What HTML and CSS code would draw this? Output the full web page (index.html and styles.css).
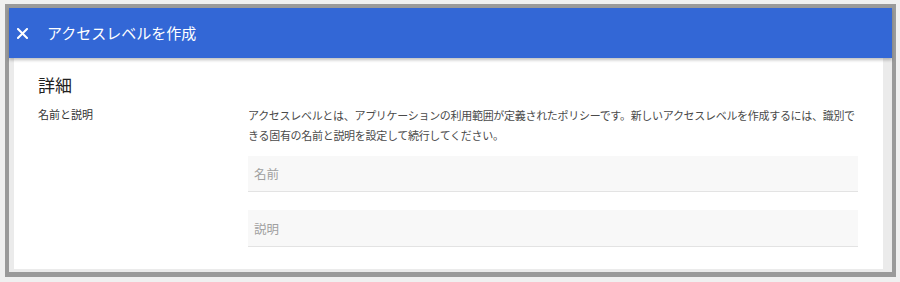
FILE: index.html
```html
<!DOCTYPE html>
<html lang="ja">
<head>
<meta charset="utf-8">
<link rel="stylesheet" href="styles.css">
</head>
<body>
<div class="frame">
  <header class="topbar">
    <svg class="close" width="11" height="11" viewBox="0 0 11 11" aria-hidden="true">
      <path d="M1 1 L10 10 M10 1 L1 10" stroke="#fff" stroke-width="2" stroke-linecap="square"/>
    </svg>
    <h1 class="title">アクセスレベルを作成</h1>
  </header>
  <div class="body">
    <main class="panel">
      <h2 class="heading">詳細</h2>
      <div class="row">
        <div class="label">名前と説明</div>
        <div class="fields">
          <p class="desc">アクセスレベルとは、アプリケーションの利用範囲が定義されたポリシーです。新しいアクセスレベルを作成するには、識別できる固有の名前と説明を設定して続行してください。</p>
          <div class="field">名前</div>
          <div class="field second">説明</div>
        </div>
      </div>
    </main>
  </div>
</div>
</body>
</html>
```
FILE: styles.css
```css
* { box-sizing: border-box; }
html, body { margin: 0; padding: 0; }
body {
  background: #f0f0f0;
  font-family: "Noto Sans CJK JP", "Noto Sans", sans-serif;
  width: 900px;
  height: 282px;
  overflow: hidden;
  padding: 4px 0 0 5px;
}
.frame {
  width: 891px;
  height: 273px;
  border: 4px solid #9a9a9a;
  border-bottom-width: 5px;
  background: #ebebeb;
  display: flex;
  flex-direction: column;
}
.topbar {
  height: 50px;
  flex: none;
  background: #3367d6;
  display: flex;
  align-items: center;
  padding-left: 8px;
  box-shadow: 0 2px 3px rgba(0,0,0,0.25);
  position: relative;
  z-index: 1;
}
.close { display: block; margin-right: 19px; margin-top: 1px; flex: none; }
.title {
  margin: 0;
  color: #fff;
  font-size: 15px;
  font-weight: 400;
  line-height: 20px;
}
.body {
  flex: 1;
  padding: 0 9px 3px 5px;
  display: flex;
  min-width: 0;
}
.panel {
  flex: 1;
  min-width: 0;
  background: #fff;
  padding: 15px 25px 0 24px;
}
.heading {
  margin: 0;
  font-size: 17px;
  font-weight: 400;
  line-height: 24px;
  color: #212121;
}
.row {
  display: flex;
  margin-top: 8px;
}
.label {
  width: 210px;
  flex: none;
  font-size: 11px;
  line-height: 18px;
  color: #333;
}
.fields { flex: 1; min-width: 0; }
.desc {
  margin: 0 -6px 0 0;
  font-size: 11px;
  letter-spacing: -0.3px;
  line-height: 20px;
  color: #4a4a4a;
}
.field {
  margin-top: 11px;
  height: 36px;
  background: #f8f8f8;
  border-bottom: 1px solid #e3e3e3;
  padding-left: 6px;
  display: flex;
  align-items: center;
  font-size: 12.5px;
  color: #a0a0a0;
}
.field.second { margin-top: 18px; height: 37px; }
```
